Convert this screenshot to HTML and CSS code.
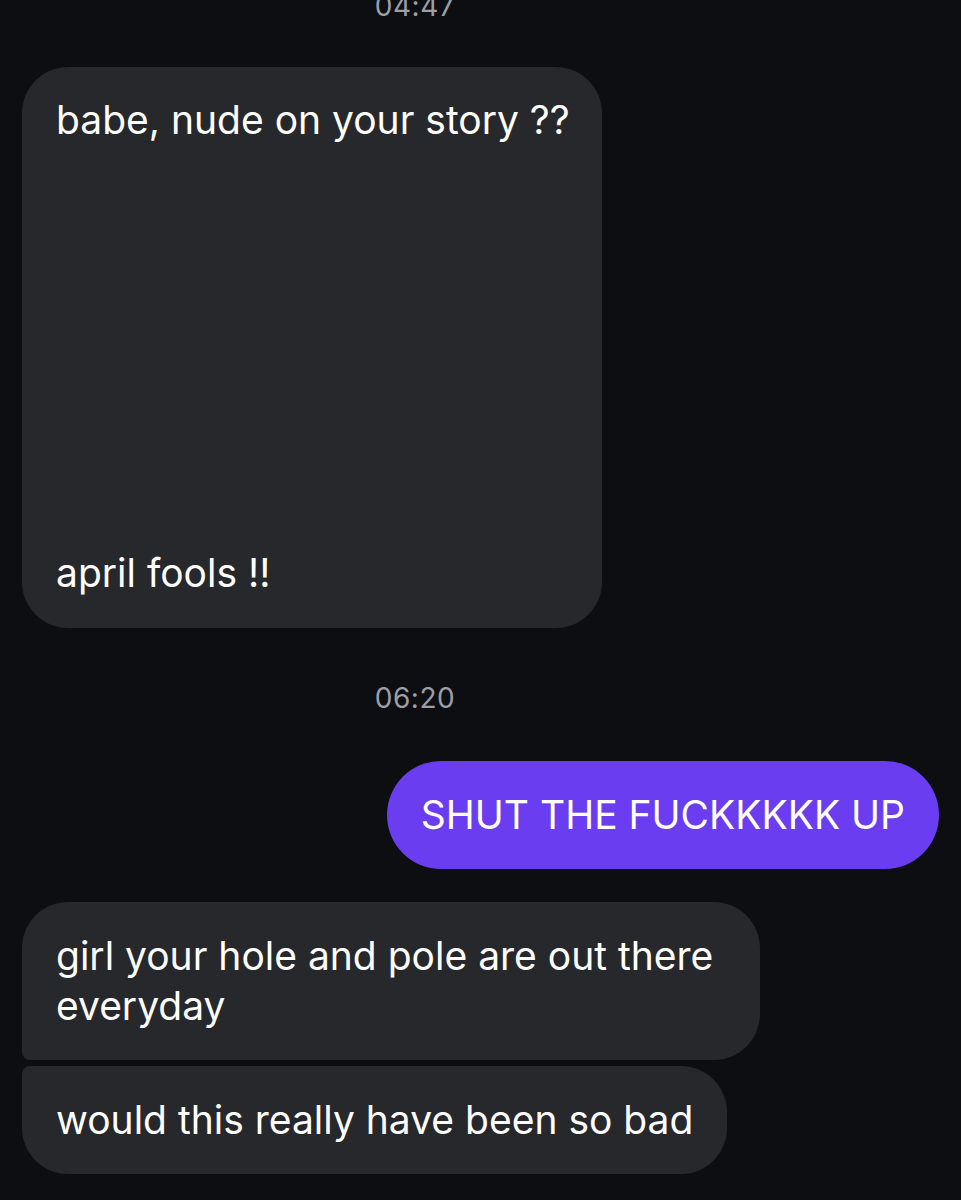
FILE: index.html
```html
<!DOCTYPE html>
<html lang="en">
<head>
    <meta charset="UTF-8">
    <meta name="viewport" content="width=device-width, initial-scale=1.0">
    <title>Chat</title>
    <link rel="stylesheet" href="styles.css">
</head>
<body>
    <div class="chat">
        <p class="time time-first">04:47</p>

        <div class="story-reply">
            <p class="msg-text">babe, nude on your story ??</p>
            <p class="msg-text">april fools !!</p>
        </div>

        <p class="time time-second">06:20</p>

        <div class="bubble bubble-out">SHUT THE FUCKKKKK UP</div>

        <div class="bubble bubble-in bubble-in-first">girl your hole and pole are out there everyday</div>
        <div class="bubble bubble-in bubble-in-last">would this really have been so bad</div>
    </div>
</body>
</html>
```

FILE: styles.css
```css
body {
    margin: 0;
    background-color: #0c0e12;
    color: white;
    font-family: Inter, "Noto Sans", sans-serif;
    overflow: hidden;
}

.chat {
    display: flex;
    flex-direction: column;
    align-items: flex-start;
    padding: 0 22px;
}

.time {
    margin: 0;
    width: 786px;
    text-align: center;
    font-size: 28px;
    letter-spacing: 0.5px;
    line-height: 30px;
    color: #9c9fa5;
}

.time-first {
    margin-top: -9px;
}

.time-second {
    margin-top: 55px;
    margin-bottom: 48px;
}

.story-reply {
    margin-top: 46px;
    width: 580px;
    height: 561px;
    box-sizing: border-box;
    padding: 28px 30px 30px 34px;
    background-color: #26282c;
    border-radius: 46px;
    display: flex;
    flex-direction: column;
    justify-content: space-between;
}

.msg-text {
    margin: 0;
    font-size: 39px;
    line-height: 50px;
    white-space: nowrap;
}

.bubble {
    box-sizing: border-box;
    padding: 29px 34px;
    font-size: 39px;
    line-height: 50px;
}

.bubble-out {
    align-self: flex-end;
    background-color: #6a3df0;
    border-radius: 54px;
}

.bubble-in {
    max-width: 738px;
    background-color: #26282c;
}

.bubble-in-first {
    margin-top: 33px;
    border-radius: 46px 46px 46px 8px;
}

.bubble-in-last {
    margin-top: 6px;
    border-radius: 8px 46px 46px 46px;
}
```
